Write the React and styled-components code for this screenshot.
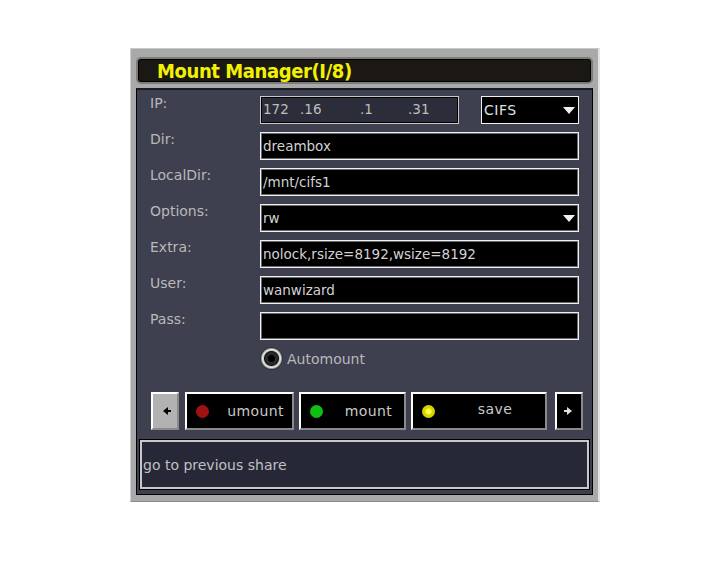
import React from "react";
import styled, { createGlobalStyle } from "styled-components";

const GlobalStyle = createGlobalStyle`
  body {
    margin: 0;
    background: #ffffff;
    font-family: "DejaVu Sans", "Liberation Sans", sans-serif;
  }
`;

const fields = [
  { label: "Dir:", value: "dreambox" },
  { label: "LocalDir:", value: "/mnt/cifs1" },
  { label: "Options:", value: "rw", select: true },
  { label: "Extra:", value: "nolock,rsize=8192,wsize=8192" },
  { label: "User:", value: "wanwizard" },
  { label: "Pass:", value: "" },
];

const ipParts = [
  { text: "172", left: 2 },
  { text: ".16", left: 39 },
  { text: ".1", left: 99 },
  { text: ".31", left: 147 },
];

const App = () => (
  <>
    <GlobalStyle />
    <Window>
      <TitleBar>
        <Title>Mount Manager(I/8)</Title>
      </TitleBar>
      <Body>
        <Form>
          <Label>IP:</Label>
          <IpRow>
            <IpField>
              {ipParts.map((p) => (
                <IpPart key={p.text} style={{ left: p.left }}>
                  {p.text}
                </IpPart>
              ))}
            </IpField>
            <Select>
              CIFS
              <Caret />
            </Select>
          </IpRow>
          {fields.map((f) => (
            <React.Fragment key={f.label}>
              <Label>{f.label}</Label>
              <Field>
                {f.value}
                {f.select && <Caret />}
              </Field>
            </React.Fragment>
          ))}
          <span />
          <Check>
            <Radio />
            Automount
          </Check>
        </Form>
        <Buttons>
          <ArrowButton $light>
            <Arrow $dir="left" />
          </ArrowButton>
          <ActionButton $width={109}>
            <Led $color="#a01212" />
            <ButtonText>umount</ButtonText>
          </ActionButton>
          <ActionButton $width={107}>
            <Led $color="#10c010" />
            <ButtonText>mount</ButtonText>
          </ActionButton>
          <ActionButton $width={136} $raise>
            <Led $color="#d4d400" $glow />
            <ButtonText>save</ButtonText>
          </ActionButton>
          <ArrowButton $end>
            <Arrow $dir="right" />
          </ArrowButton>
        </Buttons>
        <Status>go to previous share</Status>
      </Body>
    </Window>
  </>
);

const Window = styled.div`
  box-sizing: border-box;
  width: 470px;
  margin: 48px 0 0 130px;
  padding: 8px 5px 6px 5px;
  background: #a9a9a9;
  border-top: 1px solid #c8c8c8;
  border-left: 1px solid #d0d0d0;
  border-right: 2px solid #e4e4e4;
  border-bottom: 1px solid #8c8c8c;
`;

const TitleBar = styled.div`
  box-sizing: border-box;
  height: 27px;
  padding-left: 19px;
  display: flex;
  align-items: center;
  background: #1b1813;
  border: 2px solid #7c7c7c;
  border-radius: 5px;
  box-shadow: inset 0 0 0 1px #000000;
`;

const Title = styled.div`
  font-family: "DejaVu Sans Condensed", "DejaVu Sans", sans-serif;
  font-stretch: condensed;
  font-weight: bold;
  font-size: 20px;
  color: #f2f200;
  letter-spacing: -0.4px;
`;

const Body = styled.div`
  box-sizing: border-box;
  margin-top: 4px;
  height: 407px;
  padding: 6px 13px 0 12px;
  background: #3e404f;
  border: 1px solid #000000;
  border-top: 2px solid #1a1a22;
`;

const Form = styled.div`
  display: grid;
  grid-template-columns: 111px 1fr;
  row-gap: 8px;
`;

const Label = styled.div`
  padding: 0 0 0 1px;
  margin-top: -1px;
  font-size: 14px;
  line-height: 16px;
  color: #b9b9b9;
`;

const IpRow = styled.div`
  display: flex;
  justify-content: space-between;
`;

const Field = styled.div`
  box-sizing: border-box;
  position: relative;
  height: 28px;
  padding: 0 2px;
  display: flex;
  align-items: center;
  background: #000000;
  border: 1px solid #f0f0f0;
  box-shadow: inset 0 0 0 1px #6a6a6a;
  font-size: 13.5px;
  color: #d2d2d2;
`;

const IpField = styled(Field)`
  width: 199px;
  background: #2b2d3a;
  border-color: #c8c8c8;
  box-shadow: inset 0 0 0 1px #000000;
  color: #bdbdbd;
`;

const IpPart = styled.span`
  position: absolute;
  top: 4px;
`;

const Select = styled(Field)`
  width: 98px;
  box-shadow: none;
  font-size: 14px;
  color: #e0e0e0;
  letter-spacing: 0.5px;
`;

const Caret = styled.span`
  position: absolute;
  right: 3px;
  top: 10px;
  width: 0;
  height: 0;
  border-left: 6px solid transparent;
  border-right: 6px solid transparent;
  border-top: 7px solid #f0f0f0;
`;

const Check = styled.div`
  height: 23px;
  display: flex;
  align-items: center;
  gap: 4px;
  margin-top: -1px;
  font-size: 14px;
  line-height: 16px;
  color: #b9b9b9;
`;

const Radio = styled.span`
  box-sizing: border-box;
  width: 23px;
  height: 23px;
  border-radius: 50%;
  background: radial-gradient(
    circle,
    #000000 0 3px,
    #2a2a2a 4px 6px,
    #111111 7px,
    #c8c8c8 8px,
    #e8e8e8 9px,
    #9a9a9a 10px,
    #303030 11px
  );
`;

const Buttons = styled.div`
  display: flex;
  align-items: stretch;
  margin: 22px -4px 0 2px;
  height: 38px;
  gap: 5px;
  & > * {
    flex-shrink: 0;
  }
`;

const ArrowButton = styled.div`
  box-sizing: border-box;
  width: 28px;
  display: flex;
  align-items: center;
  justify-content: center;
  margin: ${(p) => (p.$end ? "0 0 0 3px" : "0 1px 0 0")};
  background: ${(p) => (p.$light ? "#b2b2b2" : "#000000")};
  border: 2px solid;
  border-color: #ffffff #8a8a8a #8a8a8a #ffffff;
`;

const Arrow = styled.span`
  width: 0;
  height: 0;
  border-top: 4px solid transparent;
  border-bottom: 4px solid transparent;
  ${(p) =>
    p.$dir === "left"
      ? "border-right: 5px solid #000000;"
      : "border-left: 5px solid #e0e0e0;"}
  position: relative;
  &::after {
    content: "";
    position: absolute;
    top: -1px;
    ${(p) => (p.$dir === "left" ? "left: 5px;" : "right: 5px;")}
    width: 3px;
    height: 2px;
    background: ${(p) => (p.$dir === "left" ? "#000000" : "#e0e0e0")};
  }
`;

const ActionButton = styled.div`
  box-sizing: border-box;
  position: relative;
  width: ${(p) => p.$width}px;
  display: flex;
  align-items: center;
  padding: 0 0 ${(p) => (p.$raise ? "4px" : "0")} 9px;
  background: #000000;
  border: 2px solid;
  border-color: #ffffff #8a8a8a #8a8a8a #ffffff;
`;

const Led = styled.span`
  width: 13px;
  height: 13px;
  border-radius: 50%;
  margin-top: ${(p) => (p.$glow ? "4px" : "0")};
  background: ${(p) =>
    p.$glow
      ? `radial-gradient(circle, #ffff40 0 2px, ${p.$color} 4px)`
      : p.$color};
`;

const ButtonText = styled.span`
  flex: 1;
  text-align: center;
  padding-left: 10px;
  font-size: 14px;
  letter-spacing: 0.4px;
  color: #c9c9c9;
`;

const Status = styled.div`
  box-sizing: border-box;
  margin: 10px -10px 0 -9px;
  height: 49px;
  padding-left: 1px;
  display: flex;
  align-items: center;
  background: #262838;
  border: 2px solid #c8c8c8;
  box-shadow: 0 0 0 1px #000000;
  font-size: 14px;
  color: #c0c0c0;
`;

export default App;
